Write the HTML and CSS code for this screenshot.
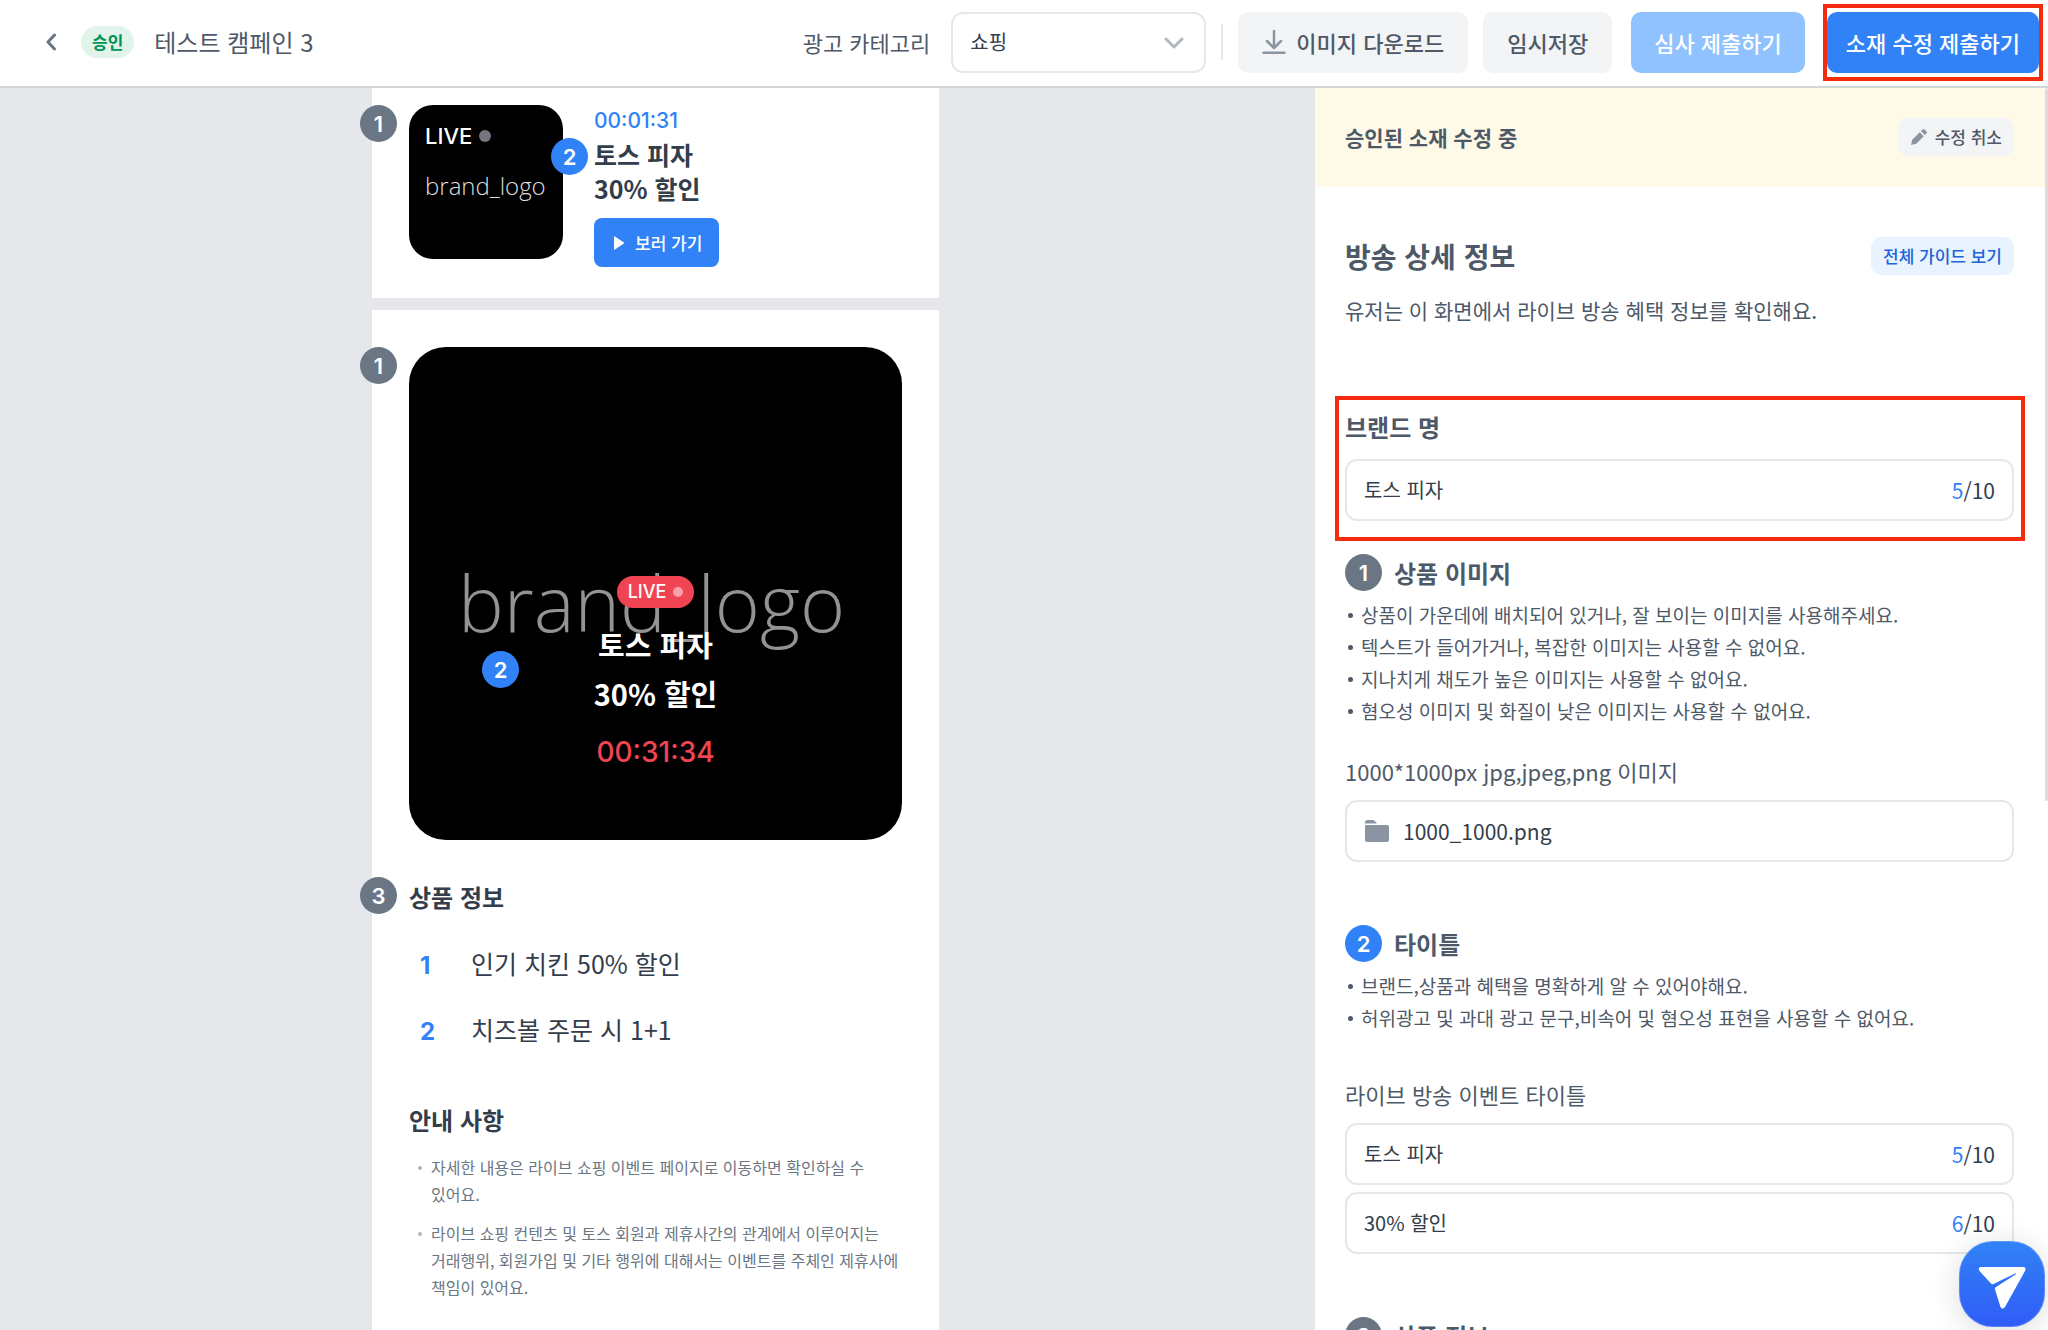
FILE: index.html
```html
<!DOCTYPE html>
<html lang="ko">
<head>
    <meta charset="UTF-8">
    <meta name="viewport" content="width=device-width, initial-scale=1.0">
    <title>테스트 캠페인 3</title>
    <link rel="stylesheet" href="styles.css">
</head>
<body>
    <header class="header">
        <button class="back" type="button" aria-label="뒤로">
            <svg width="12" height="18" viewBox="0 0 12 18" fill="none" stroke="#6b7684" stroke-width="3" stroke-linecap="round" stroke-linejoin="round"><path d="M9.5 2 3 9l6.5 7"/></svg>
        </button>
        <span class="status">승인</span>
        <h1 class="title">테스트 캠페인 3</h1>
        <label class="category-label" for="category">광고 카테고리</label>
        <div class="select">
            <select id="category">
                <option>쇼핑</option>
            </select>
            <svg width="20" height="12" viewBox="0 0 20 12" fill="none" stroke="#b0b8c1" stroke-width="3" stroke-linecap="round" stroke-linejoin="round"><path d="m2 2 8 8 8-8"/></svg>
        </div>
        <span class="divider"></span>
        <div class="actions">
            <button class="button" type="button">
                <svg width="24" height="24" viewBox="0 0 24 24" fill="none" stroke="#8b95a1" stroke-width="2.5" stroke-linecap="round" stroke-linejoin="round"><path d="M12 1v16M5 11l7 7 7-7M1.500 22.700h21"/></svg>
                이미지 다운로드
            </button>
            <button class="button" type="button">임시저장</button>
        </div>
        <button class="button primary" type="button" disabled>심사 제출하기</button>
        <div class="marked">
            <button class="button primary" type="button">소재 수정 제출하기</button>
        </div>
    </header>

    <main class="main">
        <div class="preview">
            <section class="card banner-card">
                <span class="badge badge-edge">1</span>
                <div class="thumb">
                    <div class="thumb-live">LIVE <i class="dot"></i></div>
                    <div class="thumb-logo">brand_logo</div>
                    <span class="badge blue badge-thumb">2</span>
                </div>
                <div class="banner-info">
                    <div class="banner-time">00:01:31</div>
                    <div class="banner-text">토스 피자<br>30% 할인</div>
                    <button class="go" type="button">
                        <svg width="12" height="16" viewBox="0 0 12 16" fill="#fff"><path d="M1 1.8v12.4q0 1 .9.4l9-6q.8-.6 0-1.2l-9-6Q1 .8 1 1.8z"/></svg>
                        보러 가기
                    </button>
                </div>
            </section>

            <section class="card detail-card">
                <div class="hero">
                    <span class="badge badge-hero">1</span>
                    <span class="badge blue badge-hero-title">2</span>
                    <div class="hero-logo">brand_logo</div>
                    <div class="hero-live">LIVE <i class="dot"></i></div>
                    <div class="hero-text">토스 피자<br>30% 할인</div>
                    <div class="hero-time">00:31:34</div>
                </div>
                <h2 class="card-title">
                    <span class="badge badge-title">3</span>
                    상품 정보
                </h2>
                <ol class="products">
                    <li><b>1</b>인기 치킨 50% 할인</li>
                    <li><b>2</b>치즈볼 주문 시 1+1</li>
                </ol>
                <h2 class="card-title">안내 사항</h2>
                <ul class="notes">
                    <li>자세한 내용은 라이브 쇼핑 이벤트 페이지로 이동하면 확인하실 수 있어요.</li>
                    <li>라이브 쇼핑 컨텐츠 및 토스 회원과 제휴사간의 관계에서 이루어지는 거래행위, 회원가입 및 기타 행위에 대해서는 이벤트를 주체인 제휴사에 책임이 있어요.</li>
                </ul>
            </section>
        </div>

        <aside class="panel">
            <div class="notice">
                <strong>승인된 소재 수정 중</strong>
                <button class="small-button" type="button">
                    <svg width="18" height="18" viewBox="0 0 18 18" fill="#8b95a1"><path d="m1 17 1.2-5.2 7.6-7.6 4 4-7.6 7.6z"/><path d="m10.9 3.1 1.6-1.6q1-1 2 0l2 2q1 1 0 2l-1.6 1.6z"/></svg>
                    수정 취소
                </button>
            </div>
            <form class="form">
                <div class="form-head">
                    <h2>방송 상세 정보</h2>
                    <button class="small-button guide" type="button">전체 가이드 보기</button>
                </div>
                <p class="desc">유저는 이 화면에서 라이브 방송 혜택 정보를 확인해요.</p>

                <div class="brand">
                    <label class="brand-label" for="brand">브랜드 명</label>
                    <div class="field">
                        <input type="text" id="brand" value="토스 피자">
                        <span><em>5</em>/10</span>
                    </div>
                </div>

                <section class="step">
                    <h3><span class="badge">1</span>상품 이미지</h3>
                    <ul class="guides">
                        <li>상품이 가운데에 배치되어 있거나, 잘 보이는 이미지를 사용해주세요.</li>
                        <li>텍스트가 들어가거나, 복잡한 이미지는 사용할 수 없어요.</li>
                        <li>지나치게 채도가 높은 이미지는 사용할 수 없어요.</li>
                        <li>혐오성 이미지 및 화질이 낮은 이미지는 사용할 수 없어요.</li>
                    </ul>
                    <label class="label" for="image">1000*1000px jpg,jpeg,png 이미지</label>
                    <label class="field file" for="image">
                        <svg width="24" height="24" viewBox="0 0 24 24" fill="#8b95a1"><path d="M0 4.500V3.500Q0 1 2.500 1H7q2 0 3 1.200l2 2.300z"/><path d="M0 6h22q2 0 2 2v13q0 2-2 2H2q-2 0-2-2z"/></svg>
                        1000_1000.png
                        <input type="file" id="image">
                    </label>
                </section>

                <section class="step">
                    <h3><span class="badge blue">2</span>타이틀</h3>
                    <ul class="guides">
                        <li>브랜드,상품과 혜택을 명확하게 알 수 있어야해요.</li>
                        <li>허위광고 및 과대 광고 문구,비속어 및 혐오성 표현을 사용할 수 없어요.</li>
                    </ul>
                    <label class="label title-label" for="title1">라이브 방송 이벤트 타이틀</label>
                    <div class="field">
                        <input type="text" id="title1" value="토스 피자">
                        <span><em>5</em>/10</span>
                    </div>
                    <div class="field">
                        <input type="text" id="title2" aria-label="라이브 방송 이벤트 타이틀 2" value="30% 할인">
                        <span><em>6</em>/10</span>
                    </div>
                </section>

                <section class="step">
                    <h3><span class="badge">3</span>상품 정보</h3>
                </section>
            </form>
        </aside>
        <div class="scroll-thumb"></div>
    </main>

    <button class="chat" type="button" aria-label="문의하기">
        <svg width="48" height="44" viewBox="0 0 48 44" fill="#fff"><path d="M3 1h42q4 0 2 4L27 41q-3 3.500-4.500 0L17 23.500q-.5-1.500 1-2.500L37.500 8.500q1.500-1.500-.5-1L15.500 18q-1.500.6-2.500-.5L1.500 5Q-.5 1 3 1z"/></svg>
    </button>
</body>
</html>
```
FILE: styles.css
```css
* {
    box-sizing: border-box;
}
body {
    margin: 0;
    height: 100vh;
    overflow: hidden;
    display: flex;
    flex-direction: column;
    font-family: "Noto Sans CJK KR", "Noto Sans", sans-serif;
    font-size: 22px;
    line-height: 32px;
    color: #4e5968;
    background: #e5e7eb;
    word-break: keep-all;
}
h1, h2, h3, p, ul, ol {
    margin: 0;
    padding: 0;
}
ul, ol {
    list-style: none;
}
button, input, select {
    font: inherit;
    color: inherit;
}
button {
    border: none;
    cursor: pointer;
}
svg {
    flex: none;
}

/* header */
.header {
    flex: none;
    display: flex;
    align-items: center;
    height: 88px;
    padding: 0 5px 2px 37px;
    background: #fff;
    border-bottom: 2px solid #d1d6db;
    white-space: nowrap;
}
.back {
    display: flex;
    padding: 8px;
    background: none;
}
.status {
    margin-left: 16px;
    padding: 0 11px;
    border-radius: 17px;
    background: #e0f4eb;
    color: #029359;
    font-size: 17px;
    font-weight: 700;
}
.title {
    flex: 1;
    margin-left: 20px;
    font-size: 24px;
    font-weight: 400;
}
.select {
    position: relative;
    width: 255px;
    margin-left: 21px;
}
.select select {
    appearance: none;
    width: 100%;
    height: 61px;
    padding: 0 17px;
    border: 2px solid #e5e8eb;
    border-radius: 12px;
    background: #fff;
    color: #333d4b;
    font-size: 20px;
}
.select svg {
    position: absolute;
    right: 22px;
    top: 25px;
    pointer-events: none;
}
.divider {
    width: 2px;
    height: 36px;
    margin: 0 15px;
    background: #e5e8eb;
}
.actions {
    display: flex;
    gap: 15px;
    margin-right: 19px;
}
.button {
    display: flex;
    align-items: center;
    gap: 10px;
    height: 61px;
    padding: 0 23px;
    border-radius: 10px;
    background: #f2f4f6;
    color: #4e5968;
    font-weight: 500;
}
.actions .button {
    padding: 0 24px;
}
.button.primary {
    background: #3182f6;
    color: #fff;
}
.button.primary:disabled {
    background: #90c2ff;
}
.marked {
    margin-left: 18px;
    padding: 4px 0;
    border: 4px solid #f22c0d;
}
.marked .button {
    padding: 0 19px;
}

.main {
    position: relative;
    flex: 1;
    min-height: 0;
    display: grid;
    grid-template-columns: 1fr 733px;
}
.badge {
    display: flex;
    align-items: center;
    justify-content: center;
    width: 37px;
    height: 37px;
    border-radius: 50%;
    background: #6b7684;
    color: #fff;
    font-family: Inter, sans-serif;
    font-size: 22px;
    font-weight: 600;
}
.badge.blue {
    background: #3182f6;
}
.dot {
    width: 12px;
    height: 12px;
    border-radius: 50%;
    background: #75757d;
}

/* preview */
.preview {
    display: flex;
    flex-direction: column;
    align-items: center;
    gap: 12px;
    padding-right: 4px;
    overflow: hidden;
}
.card {
    position: relative;
    flex: none;
    width: 567px;
    padding: 37px;
    background: #fff;
    color: #333d4b;
}
.banner-card {
    display: flex;
    gap: 31px;
    padding-top: 17px;
    padding-bottom: 31px;
}
.badge-edge,
.badge-hero,
.badge-title {
    position: absolute;
    left: -12px;
}
.badge-hero,
.badge-title {
    left: -49px;
    top: 0;
}
.thumb {
    position: relative;
    width: 154px;
    height: 154px;
    padding: 16px;
    border-radius: 24px;
    background: #000;
    color: #fff;
}
.thumb-live {
    display: flex;
    align-items: center;
    gap: 7px;
    font-family: Inter, sans-serif;
    font-weight: 500;
    line-height: 30px;
}
.thumb-logo {
    margin-top: 19px;
    font-family: "Open Sans", sans-serif;
    font-size: 24px;
    font-weight: 300;
    color: #ddd;
}
.badge-thumb {
    position: absolute;
    right: -25px;
    top: 33px;
}
.banner-time {
    font-family: Inter, sans-serif;
    font-size: 21px;
    font-weight: 500;
    color: #3182f6;
}
.banner-text {
    font-size: 25px;
    font-weight: 700;
    line-height: 34px;
}
.go {
    display: flex;
    align-items: center;
    gap: 10px;
    height: 49px;
    margin-top: 13px;
    padding: 0 17px 0 19px;
    border-radius: 8px;
    background: #3182f6;
    color: #fff;
    font-size: 17px;
    font-weight: 500;
}
.hero {
    position: relative;
    display: flex;
    flex-direction: column;
    align-items: center;
    height: 493px;
    padding-top: 229px;
    border-radius: 37px;
    background: #000;
    color: #fff;
}
.hero-logo {
    position: absolute;
    top: 206px;
    left: 0;
    right: 0;
    padding-right: 8px;
    font-family: "Open Sans", sans-serif;
    font-size: 77px;
    font-weight: 300;
    line-height: 100px;
    text-align: center;
    color: #939393;
}
.badge-hero-title {
    position: absolute;
    left: 73px;
    top: 304px;
}
.hero-live {
    position: relative;
    display: flex;
    align-items: center;
    gap: 7px;
    padding: 0 11px;
    border-radius: 16px;
    background: #f04452;
    font-family: Inter, sans-serif;
    font-size: 18px;
    font-weight: 500;
}
.hero-live .dot {
    width: 10px;
    height: 10px;
    background: #f7a1a8;
}
.hero-text {
    position: relative;
    margin-top: 12px;
    font-size: 29px;
    font-weight: 700;
    line-height: 49px;
    text-align: center;
}
.hero-time {
    margin-top: 18px;
    font-family: Inter, sans-serif;
    font-size: 28px;
    font-weight: 500;
    color: #f04452;
}
.card-title {
    position: relative;
    margin-top: 37px;
    font-size: 24px;
    font-weight: 700;
    line-height: 40px;
}
.products {
    margin: 13px 0 38px;
    font-size: 25px;
    line-height: 66px;
}
.products li {
    display: flex;
    align-items: baseline;
    height: 66px;
}
.products b {
    width: 62px;
    padding-left: 11px;
    font-family: Inter, sans-serif;
    font-size: 24px;
    color: #3182f6;
}
.notes {
    display: grid;
    gap: 12px;
    margin-top: 14px;
    color: #6b7684;
    font-size: 16px;
    line-height: 27px;
}
.notes li,
.guides li {
    display: flex;
}
.notes li::before {
    content: "";
    flex: none;
    width: 4px;
    height: 4px;
    margin: 12px 9px 0;
    border-radius: 50%;
    background: #b0b8c1;
}

/* edit panel */
.panel {
    padding-right: 3px;
    overflow-y: auto;
    scrollbar-width: none;
    background: #fff;
}
.notice {
    display: flex;
    align-items: center;
    justify-content: space-between;
    height: 99px;
    padding: 0 31px 2px 30px;
    background: #fff9e7;
}
.notice strong {
    font-size: 21px;
    font-weight: 700;
}
.small-button {
    display: flex;
    align-items: center;
    gap: 7px;
    height: 38px;
    padding: 0 12px;
    border-radius: 10px;
    background: #f2f4f6;
    font-size: 17px;
    font-weight: 500;
}
.small-button.guide {
    background: #e8f3ff;
    color: #1b64da;
}
.form {
    padding: 50px 31px 30px 30px;
}
.form-head {
    display: flex;
    align-items: center;
    justify-content: space-between;
    height: 38px;
}
.form-head h2 {
    font-size: 28px;
    font-weight: 700;
}
.desc {
    margin-top: 19px;
    font-size: 21px;
}
.brand {
    margin: 70px -11px 13px -10px;
    padding: 11px 7px 16px 6px;
    border: 4px solid #f22c0d;
}
.brand-label {
    display: block;
    margin-bottom: 16px;
    font-size: 24px;
    font-weight: 700;
}
.field {
    display: flex;
    align-items: center;
    height: 62px;
    padding: 0 17px;
    border: 2px solid #e5e8eb;
    border-radius: 12px;
    color: #333d4b;
    font-size: 21px;
}
.field + .field {
    margin-top: 7px;
}
.field input {
    flex: 1;
    min-width: 0;
    padding: 0;
    border: none;
    outline: none;
    background: none;
    font-size: 20px;
}
.field em {
    font-style: normal;
    color: #3182f6;
}
.field.file {
    gap: 14px;
    padding-left: 18px;
    cursor: pointer;
}
.field.file input {
    opacity: 0;
}
.step {
    margin-bottom: 63px;
}
.step h3 {
    display: flex;
    align-items: center;
    gap: 12px;
    height: 37px;
    font-size: 24px;
    font-weight: 700;
}
.guides {
    margin-top: 8px;
    font-size: 19px;
}
.guides li::before {
    content: "";
    flex: none;
    width: 5px;
    height: 5px;
    margin: 14px 8px 0 3px;
    border-radius: 50%;
    background: #4e5968;
}
.label {
    display: block;
    margin: 28px 0 13px;
}
.title-label {
    margin-top: 44px;
}
.scroll-thumb {
    position: absolute;
    top: 0;
    right: 0;
    width: 3px;
    height: 713px;
    border-radius: 3px;
    background: #dcdcdc;
}

.chat {
    position: fixed;
    right: 3px;
    bottom: 3px;
    display: flex;
    align-items: center;
    justify-content: center;
    width: 86px;
    height: 86px;
    padding: 8px 0 0;
    border-radius: 34px;
    background: linear-gradient(#3182f6, #2f5cf6);
    box-shadow: 0 4px 30px rgba(0,0,0,0.14), inset 0 0 0 1px rgba(255,255,255,0.2);
}
```
